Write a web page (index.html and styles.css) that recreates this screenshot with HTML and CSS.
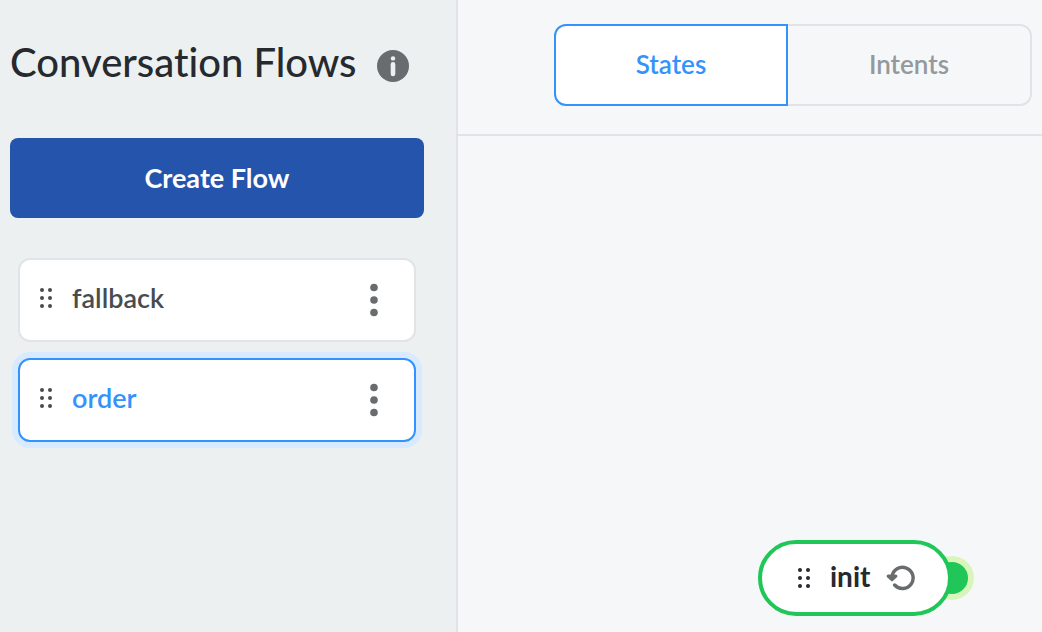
FILE: index.html
```html
<!DOCTYPE html>
<html lang="en">
<head>
<meta charset="utf-8">
<title>Conversation Flows</title>
<link rel="stylesheet" href="styles.css">
</head>
<body>
<div class="app">
  <aside class="sidebar">
    <header class="sidebar-header">
      <h1 class="title">Conversation Flows</h1>
      <button class="icon-button" type="button" aria-label="About conversation flows">
        <svg class="icon-info" viewBox="0 0 32 32" aria-hidden="true">
          <circle cx="16" cy="16" r="16" fill="#686c6e"/>
          <circle cx="16" cy="8.4" r="2.2" fill="#ecf0f1"/>
          <rect x="13.7" y="12" width="4.6" height="14.2" rx="2.3" fill="#ecf0f1"/>
        </svg>
      </button>
    </header>
    <button class="create-button" type="button">Create Flow</button>
    <ul class="flow-list">
      <li class="flow">
        <svg class="grip" viewBox="0 0 12 20" aria-hidden="true"><circle cx="2" cy="2" r="2"/><circle cx="10" cy="2" r="2"/><circle cx="2" cy="10" r="2"/><circle cx="10" cy="10" r="2"/><circle cx="2" cy="18" r="2"/><circle cx="10" cy="18" r="2"/></svg>
        <a class="flow-name" href="#fallback">fallback</a>
        <button class="icon-button" type="button" aria-label="Options for fallback">
          <svg class="kebab" viewBox="0 0 8 34" aria-hidden="true"><circle cx="4" cy="4.5" r="3.8"/><circle cx="4" cy="17" r="3.8"/><circle cx="4" cy="29.5" r="3.8"/></svg>
        </button>
      </li>
      <li class="flow flow-active">
        <svg class="grip" viewBox="0 0 12 20" aria-hidden="true"><circle cx="2" cy="2" r="2"/><circle cx="10" cy="2" r="2"/><circle cx="2" cy="10" r="2"/><circle cx="10" cy="10" r="2"/><circle cx="2" cy="18" r="2"/><circle cx="10" cy="18" r="2"/></svg>
        <a class="flow-name" href="#order" aria-current="true">order</a>
        <button class="icon-button" type="button" aria-label="Options for order">
          <svg class="kebab" viewBox="0 0 8 34" aria-hidden="true"><circle cx="4" cy="4.5" r="3.8"/><circle cx="4" cy="17" r="3.8"/><circle cx="4" cy="29.5" r="3.8"/></svg>
        </button>
      </li>
    </ul>
  </aside>
  <main class="main">
    <div class="toolbar">
      <div class="tabs" role="tablist">
        <button class="tab tab-active" type="button" role="tab" aria-selected="true">States</button>
        <button class="tab" type="button" role="tab" aria-selected="false">Intents</button>
      </div>
    </div>
    <div class="canvas">
      <div class="node">
        <span class="port"></span>
        <div class="node-body">
          <svg class="grip grip-dark" viewBox="0 0 12 20" aria-hidden="true"><circle cx="2" cy="2" r="2"/><circle cx="10" cy="2" r="2"/><circle cx="2" cy="10" r="2"/><circle cx="10" cy="10" r="2"/><circle cx="2" cy="18" r="2"/><circle cx="10" cy="18" r="2"/></svg>
          <span class="node-name">init</span>
          <svg class="reset" viewBox="0 0 30 28" aria-hidden="true">
            <path d="M6 12.5A10.6 10.6 0 1 1 8.6 21" fill="none" stroke="#686c6e" stroke-width="3.4" stroke-linecap="round"/>
            <path d="M2.2 12L6 15.6L9.8 12Z" fill="#686c6e" stroke="#686c6e" stroke-width="3.2" stroke-linejoin="round"/>
          </svg>
        </div>
      </div>
    </div>
  </main>
</div>
</body>
</html>
```
FILE: styles.css
```css
* {
  box-sizing: border-box;
}

body {
  margin: 0;
  font-family: Lato, "Open Sans", sans-serif;
  font-size: 26px;
  font-variant-ligatures: none;
  line-height: 32px;
  color: #262a2e;
}

button {
  font: inherit;
  font-variant-ligatures: none;
  cursor: pointer;
}

.app {
  display: flex;
  min-height: 100vh;
}

.sidebar {
  flex: 0 0 458px;
  padding: 37px 32px 24px 10px;
  background: #ecf0f1;
  border-right: 2px solid #e1e4e6;
}

.sidebar-header {
  display: flex;
  align-items: center;
  gap: 20px;
  margin-bottom: 51px;
}

.title {
  margin: 0;
  font-size: 40px;
  font-weight: 500;
  line-height: 50px;
}

.icon-button {
  display: flex;
  padding: 0;
  border: 0;
  background: none;
}

.icon-info {
  width: 32px;
  height: 32px;
  margin-top: 8px;
}

.create-button {
  display: block;
  width: 100%;
  height: 80px;
  padding: 0;
  border: 0;
  border-radius: 8px;
  background: #2454ac;
  color: #fff;
  font-size: 27px;
  font-weight: 700;
}

.flow-list {
  display: grid;
  gap: 16px;
  margin: 40px 8px 0;
  padding: 0;
  list-style: none;
}

.flow {
  display: flex;
  align-items: center;
  gap: 20px;
  height: 84px;
  padding: 0 36px 0 20px;
  border: 2px solid #e1e4e6;
  border-radius: 12px;
  background: #fff;
  color: #484c50;
}

.flow-active {
  border-color: #3492fc;
  box-shadow: 0 0 0 6px #d8eaff;
}

.flow-name {
  flex: 1;
  padding-bottom: 4px;
  color: inherit;
  font-size: 27px;
  font-weight: 600;
  text-decoration: none;
}

.flow-active .flow-name {
  color: #3492fc;
}

.grip {
  width: 12px;
  height: 20px;
  margin-bottom: 4px;
  fill: #484c50;
}

.grip-dark {
  margin-bottom: 0;
  fill: #262a2e;
}

.kebab {
  width: 8px;
  height: 34px;
  fill: #686c6e;
}

.main {
  display: flex;
  flex: 1;
  flex-direction: column;
  background: #f5f7f9;
}

.toolbar {
  padding: 24px 10px 28px 96px;
  border-bottom: 2px solid #e1e4e6;
}

.tabs {
  display: flex;
}

.tab {
  flex: 1 1 244px;
  height: 82px;
  padding: 0 0 2px;
  border: 2px solid #e1e4e6;
  border-left: 0;
  border-radius: 0 12px 12px 0;
  background: none;
  color: #94999d;
  font-weight: 600;
}

.tab-active {
  flex-basis: 234px;
  border: 2px solid #3492fc;
  border-radius: 12px 0 0 12px;
  background: #fff;
  color: #3492fc;
}

.canvas {
  position: relative;
  flex: 1;
}

.node {
  position: absolute;
  top: 404px;
  left: 300px;
}

.node-body {
  position: relative;
  display: flex;
  align-items: center;
  width: 194px;
  height: 76px;
  padding-left: 36px;
  border: 4px solid #20c658;
  border-radius: 38px;
  background: #fff;
}

.node-name {
  width: 42px;
  margin: 0 14px 0 20px;
  padding-bottom: 4px;
  font-size: 28px;
  font-weight: 700;
}

.reset {
  width: 30px;
  height: 28px;
}

.port {
  position: absolute;
  top: 22px;
  right: -16px;
  width: 32px;
  height: 32px;
  border-radius: 50%;
  background: #20c658;
  box-shadow: 0 0 0 6px #d8f6bc;
}
```
